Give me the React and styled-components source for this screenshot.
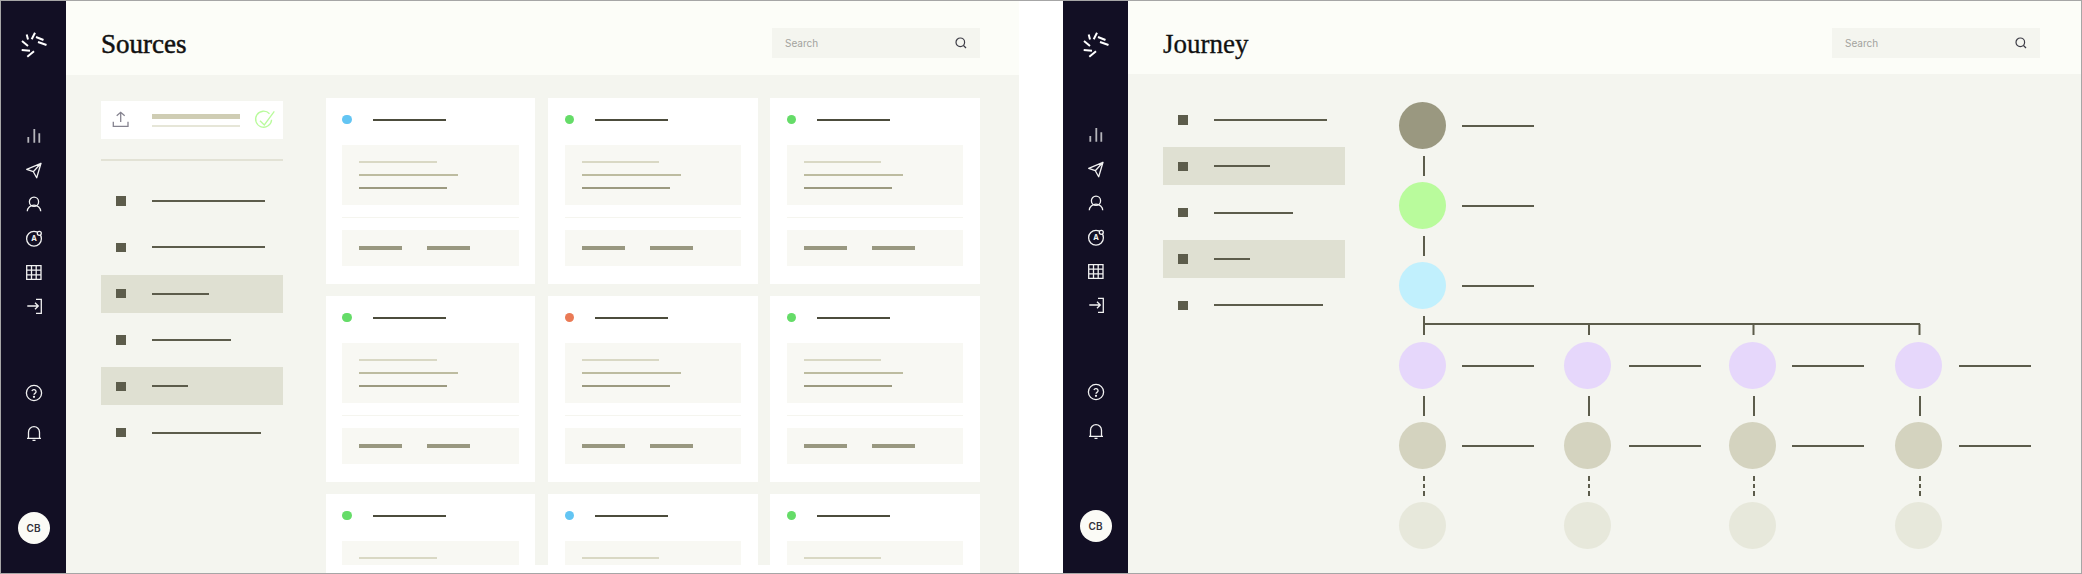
import React from 'react';
import styled, { createGlobalStyle } from 'styled-components';

const LINE = '#5c5c4b';
const RAIL = '#120f24';

const GlobalStyle = createGlobalStyle`
  html, body {
    margin: 0;
    padding: 0;
    background: #fff;
  }
`;

const Frame = styled.div`
  box-sizing: border-box;
  width: 2082px;
  height: 574px;
  border: 1px solid #a6a6a6;
  display: flex;
  gap: 44px;
  background: #fff;
  overflow: hidden;
`;

const Panel = styled.section`
  width: 1018px;
  flex: none;
  display: flex;
  background: #f4f5ef;
`;

const Rail = styled.nav`
  width: 65px;
  flex: none;
  display: flex;
  flex-direction: column;
  align-items: center;
  background: ${RAIL};
  padding: 28px 0 ${({ $tight }) => ($tight ? '31px' : '29px')};
  box-sizing: border-box;
`;

const NavGroup = styled.div`
  display: flex;
  flex-direction: column;
  gap: ${({ $gap }) => $gap}px;
  margin-top: ${({ $top }) => $top}px;
`;

const Avatar = styled.div`
  width: 32px;
  height: 32px;
  margin-top: auto;
  border-radius: 50%;
  background: #fbfbf6;
  color: #34333c;
  display: flex;
  align-items: center;
  justify-content: center;
  font: 600 10px 'Inter', sans-serif;
`;

const Main = styled.div`
  flex: 1;
  min-width: 0;
  display: flex;
  flex-direction: column;
  overflow: hidden;
`;

const TopBar = styled.header`
  height: ${({ $tight }) => ($tight ? '73px' : '74px')};
  flex: none;
  box-sizing: border-box;
  padding: 10px ${({ $tight }) => ($tight ? '41px' : '39px')} 0 35px;
  display: flex;
  align-items: center;
  justify-content: space-between;
  background: #fcfdf8;
`;

const Title = styled.h1`
  margin: 3px 0 0;
  font: 400 27px 'Liberation Serif', serif;
  color: #111;
  -webkit-text-stroke: ${({ $heavy }) => ($heavy ? '0.5px' : '0.3px')} #111;
`;

const SearchBox = styled.div`
  width: 208px;
  height: 30px;
  box-sizing: border-box;
  padding: 0 13px;
  display: flex;
  align-items: center;
  justify-content: space-between;
  background: #f4f5ef;
  color: #a3a39e;
  font: 400 10px 'Inter', sans-serif;
`;

const Body = styled.div`
  flex: 1;
  min-height: 0;
  display: flex;
  padding-left: 35px;
`;

const SideColumn = styled.div`
  width: 182px;
  flex: none;
  padding-top: ${({ $top }) => $top}px;
`;

const UploadCard = styled.div`
  height: 38px;
  display: flex;
  align-items: center;
  padding-left: 11px;
  background: #fff;
`;

const UploadBars = styled.div`
  width: 88px;
  margin: 0 14px 0 22px;
  display: flex;
  flex-direction: column;
  gap: 6px;
`;

const UploadBar = styled.div`
  height: ${({ $thin }) => ($thin ? '2px' : '5px')};
  background: ${({ $thin }) => ($thin ? '#e6e6d8' : '#cfcdb4')};
`;

const Rule = styled.hr`
  margin: 20px 0 21px;
  border: 0;
  height: 2px;
  background: #e2e2d5;
`;

const RowList = styled.div`
  display: flex;
  flex-direction: column;
  gap: 8.33px;
`;

const Row = styled.div`
  height: 38px;
  display: flex;
  align-items: center;
  padding-left: 15px;
  background: ${({ $active }) => ($active ? '#dfe0d2' : 'transparent')};
`;

const Square = styled.span`
  width: 9.5px;
  height: 9.5px;
  margin-right: 26.5px;
  background: ${LINE};
`;

const Stroke = styled.span`
  display: block;
  width: ${({ $w }) => $w}px;
  height: ${({ $h }) => $h || 2}px;
  background: ${({ $c }) => $c || LINE};
`;

const CardArea = styled.div`
  position: relative;
  width: 654.3px;
  margin: 23px 0 0 42.7px;
  overflow: hidden;
`;

const CardGrid = styled.div`
  display: grid;
  grid-template-columns: repeat(3, 1fr);
  grid-auto-rows: 185.7px;
  column-gap: 12.5px;
  row-gap: 12.3px;
`;

const Card = styled.article`
  box-sizing: border-box;
  padding: 0 16.7px;
  background: #fff;
`;

const CardHead = styled.div`
  height: 47.3px;
  box-sizing: border-box;
  padding-bottom: 4px;
  display: flex;
  align-items: center;
  gap: 20.7px;
`;

const Dot = styled.span`
  width: 9.5px;
  height: 9.5px;
  border-radius: 50%;
  background: ${({ $c }) => $c};
`;

const Well = styled.div`
  background: #f8f8f3;
`;

const TextWell = styled(Well)`
  height: 59.7px;
  box-sizing: border-box;
  padding: 15.7px 17px 0;
  display: flex;
  flex-direction: column;
  gap: 11px;
`;

const CardRule = styled.div`
  height: 1.5px;
  margin: 12px 0 11.7px;
  background: #f5f5ef;
`;

const MetaWell = styled(Well)`
  height: 35.6px;
  padding: 0 17px;
  display: flex;
  align-items: center;
  gap: 25px;
`;

const FadeStrip = styled.div`
  position: absolute;
  left: 0;
  right: 0;
  bottom: 0;
  height: 8px;
  background: #fff;
`;

const Graph = styled.div`
  margin: 28px 0 0 54.3px;
`;

const NodeRow = styled.div`
  display: flex;
  align-items: center;
`;

const Circle = styled.span`
  display: block;
  width: 47px;
  height: 47px;
  flex: none;
  border-radius: 50%;
  background: ${({ $c }) => $c};
`;

const NodeLabel = styled(Stroke)`
  margin-left: ${({ $gap }) => $gap}px;
`;

const Link = styled.div`
  width: 2px;
  height: 20px;
  margin: 6.5px 0 6.5px 24px;
  background: ${({ $dashed }) =>
    $dashed ? `repeating-linear-gradient(to bottom, ${LINE} 0 4.5px, transparent 4.5px 7.5px)` : LINE};
`;

const BranchSvg = styled.svg`
  display: block;
`;

const Branches = styled.div`
  display: grid;
  grid-template-columns: 165px 164.7px 166px auto;
`;

const Icon = ({ children, size = 20 }) => (
  <svg
    width={size}
    height={size}
    viewBox={`0 0 ${size} ${size}`}
    fill="none"
    stroke="#f1f1f1"
    strokeWidth="1.3"
    style={{ display: 'block' }}
  >
    {children}
  </svg>
);

const Logo = () => (
  <svg width="30" height="30" viewBox="0 0 30 30" stroke="#fff" strokeWidth="2" style={{ display: 'block' }}>
    <path d="M7.7 5.5l1.3 5M16 3.7l-3.3 6.6M17 8l7.5 3M19 13l8.5 3M3 12l6 5M2.7 21l8.3.7M8.3 27.7l6.7-5.4" />
  </svg>
);

const BarsIcon = () => (
  <Icon>
    <path d="M4.3 16.7V11M10.3 16.7V3M15.3 16.7V7.3" strokeWidth="1.8" stroke="#b5b5bb" />
  </Icon>
);
const SendIcon = () => (
  <Icon>
    <path d="M17 3.3L2.7 9.3l6.6 2.4 3.4 6zM9.3 11.7L17 3.3" strokeLinejoin="round" />
  </Icon>
);
const UserIcon = () => (
  <Icon>
    <circle cx="10" cy="7.7" r="4.6" />
    <path d="M3.3 17.3a6.7 6.2 0 0 1 13.4 0" />
  </Icon>
);
const BadgeIcon = () => (
  <Icon>
    <circle cx="10" cy="10.7" r="7.4" />
    <circle cx="15.3" cy="5.3" r="2" fill={RAIL} />
    <text x="10" y="13.4" textAnchor="middle" fontFamily="Inter, sans-serif" fontSize="7.5" fontWeight="700" fill="#f1f1f1" stroke="none">A</text>
  </Icon>
);
const TableIcon = () => (
  <Icon>
    <path d="M2.7 3.7H17v13.6H2.7zM7.5 3.7v13.6M12.2 3.7v13.6M2.7 8.2H17M2.7 12.8H17" />
  </Icon>
);
const EnterIcon = () => (
  <Icon>
    <path d="M3.3 10h11M11 6.7l3.3 3.3-3.3 3.3M12 3.3h5.3v14H12" />
  </Icon>
);
const HelpIcon = () => (
  <Icon>
    <circle cx="10" cy="10" r="7.6" />
    <path d="M7.9 8a2.2 2.2 0 0 1 4.2.7c0 1.5-2.1 1.8-2.1 3" />
    <circle cx="10" cy="13.8" r=".5" fill="#f1f1f1" />
  </Icon>
);
const BellIcon = () => (
  <Icon>
    <path d="M4.5 15.2V9.2a5.5 5.5 0 0 1 11 0v6M3 15.4h14M8.5 17.3h3" />
  </Icon>
);
const SearchIcon = () => (
  <svg width="12" height="12" viewBox="0 0 12 12" fill="none" stroke="#3d3c46" strokeWidth="1.2" style={{ display: 'block' }}>
    <circle cx="5.3" cy="5.3" r="4.3" />
    <path d="M8.5 8.5L11 11" />
  </svg>
);
const UploadIcon = () => (
  <svg width="18" height="18" viewBox="0 0 18 18" fill="none" stroke="#85838f" strokeWidth="1.3" style={{ display: 'block' }}>
    <path d="M1.3 10.7v4.6H16v-4.6M8.7 11V1.3M4.7 4.7l4-3.4 4 3.4" />
  </svg>
);
const CheckIcon = () => (
  <svg width="22" height="22" viewBox="0 0 22 22" fill="none" stroke="#b9fb9c" strokeWidth="1.3" style={{ display: 'block' }}>
    <path d="M15.5 4.8A8 8 0 1 0 17.6 10.7" />
    <path d="M6 11.7l4.3 4.3L20.3 2.3" />
  </svg>
);

const Sidebar = ({ tight }) => (
  <Rail $tight={tight}>
    <Logo />
    <NavGroup $top={tight ? 66 : 67} $gap={14}>
      <BarsIcon />
      <SendIcon />
      <UserIcon />
      <BadgeIcon />
      <TableIcon />
      <EnterIcon />
    </NavGroup>
    <NavGroup $top={67} $gap={tight ? 19 : 20}>
      <HelpIcon />
      <BellIcon />
    </NavGroup>
    <Avatar>CB</Avatar>
  </Rail>
);

const Header = ({ title, tight, heavy }) => (
  <TopBar $tight={tight}>
    <Title $heavy={heavy}>{title}</Title>
    <SearchBox>
      <span>Search</span>
      <SearchIcon />
    </SearchBox>
  </TopBar>
);

const SourceRows = ({ rows }) => (
  <RowList>
    {rows.map((row, i) => (
      <Row key={i} $active={row.active}>
        <Square />
        <Stroke $w={row.w} />
      </Row>
    ))}
  </RowList>
);

const sourceRows = [
  { w: 113 },
  { w: 113 },
  { w: 56.5, active: true },
  { w: 79 },
  { w: 36, active: true },
  { w: 109 },
];

const journeyRows = [
  { w: 112.7 },
  { w: 56.3, active: true },
  { w: 78.7 },
  { w: 36, active: true },
  { w: 108.7 },
];

const BLUE = '#63c5f3';
const GREEN = '#65dc68';
const ORANGE = '#ea7a55';
const cardDots = [BLUE, GREEN, GREEN, GREEN, ORANGE, GREEN, GREEN, BLUE, GREEN];

const SourceCard = ({ dot }) => (
  <Card>
    <CardHead>
      <Dot $c={dot} />
      <Stroke $w={73} $c="#4c4c3c" />
    </CardHead>
    <TextWell>
      <Stroke $w={77.5} $c="#d9d8c4" />
      <Stroke $w={99} $c="#bdbca0" />
      <Stroke $w={88} $c="#9c9a80" />
    </TextWell>
    <CardRule />
    <MetaWell>
      <Stroke $w={43} $h={4} $c="#999880" />
      <Stroke $w={43} $h={4} $c="#999880" />
    </MetaWell>
  </Card>
);

const stem = ['#9a9880', '#b9fb9c', '#c1f0fd'];
const labelGaps = [16, 18, 16, 17];

const Journey = () => (
  <Graph>
    {stem.map((color, i) => (
      <React.Fragment key={color}>
        <NodeRow>
          <Circle $c={color} />
          <NodeLabel $w={72} $gap={16} />
        </NodeRow>
        {i < stem.length - 1 && <Link />}
      </React.Fragment>
    ))}
    <BranchSvg width="523" height="33" viewBox="0 0 523 33" fill="none" stroke={LINE} strokeWidth="2">
      <path d="M25 7v19M25 15h496M190 15v11M354.5 15v11M520.5 15v11" />
    </BranchSvg>
    <Branches>
      {labelGaps.map((gap, i) => (
        <div key={i}>
          <NodeRow>
            <Circle $c="#e6d7fb" />
            <NodeLabel $w={72} $gap={gap} />
          </NodeRow>
          <Link />
          <NodeRow>
            <Circle $c="#d4d3bf" />
            <NodeLabel $w={72} $gap={gap} />
          </NodeRow>
          <Link $dashed />
          <Circle $c="#e7e8db" />
        </div>
      ))}
    </Branches>
  </Graph>
);

const App = () => (
  <>
    <GlobalStyle />
    <Frame>
      <Panel>
        <Sidebar />
        <Main>
          <Header title="Sources" heavy />
          <Body>
            <SideColumn $top={26}>
              <UploadCard>
                <UploadIcon />
                <UploadBars>
                  <UploadBar />
                  <UploadBar $thin />
                </UploadBars>
                <CheckIcon />
              </UploadCard>
              <Rule />
              <SourceRows rows={sourceRows} />
            </SideColumn>
            <CardArea>
              <CardGrid>
                {cardDots.map((dot, i) => (
                  <SourceCard key={i} dot={dot} />
                ))}
              </CardGrid>
              <FadeStrip />
            </CardArea>
          </Body>
        </Main>
      </Panel>
      <Panel>
        <Sidebar tight />
        <Main>
          <Header title="Journey" tight />
          <Body>
            <SideColumn $top={27}>
              <SourceRows rows={journeyRows} />
            </SideColumn>
            <Journey />
          </Body>
        </Main>
      </Panel>
    </Frame>
  </>
);

export default App;
